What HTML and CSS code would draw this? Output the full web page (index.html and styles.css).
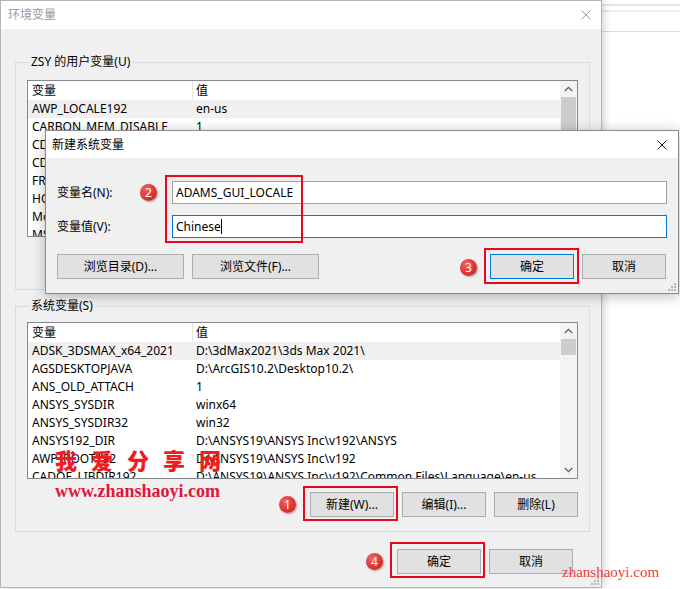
FILE: index.html
```html
<!doctype html>
<html lang="zh-CN">
<head>
    <meta charset="UTF-8">
    <title>环境变量</title>
    <link rel="stylesheet" href="styles.css">
</head>
<body>
<div class="desk">
    <!-- window behind -->
    <div class="behind"><div class="behind-line"></div></div>

    <!-- main window -->
    <div class="win">
        <div class="titlebar">
            <span class="title">环境变量</span>
            <svg class="close" width="10" height="10" viewBox="0 0 10 10"><path d="M0.5 0.5L9.5 9.5M9.5 0.5L0.5 9.5"/></svg>
        </div>
        <div class="win-body">
            <fieldset class="group user">
                <legend>ZSY 的用户变量(U)</legend>
                <div class="list">
                    <div class="list-view">
                        <div class="row head"><span>变量</span><span>值</span></div>
                        <div class="row sel"><span>AWP_LOCALE192</span><span>en-us</span></div>
                        <div class="row"><span>CARBON_MEM_DISABLE</span><span>1</span></div>
                        <div class="row"><span>CDS_LIC_FILE</span><span>5280@localhost</span></div>
                        <div class="row"><span>CDSROOT</span><span>D:\Cadence\SPB_17.2</span></div>
                        <div class="row"><span>FR_LICENSE</span><span>27000@localhost</span></div>
                        <div class="row"><span>HOME</span><span>C:\Users\ZSY</span></div>
                        <div class="row"><span>Mozilla_Home</span><span>C:\Program Files\Mozilla</span></div>
                        <div class="row"><span>MSC_LICENSE_FILE</span><span>27500@localhost</span></div>
                    </div>
                    <div class="scroll">
                        <div class="arrow"><svg width="9" height="6" viewBox="0 0 9 6"><path d="M0.8 5L4.5 1.3L8.2 5"/></svg></div>
                        <div class="thumb long"></div>
                    </div>
                </div>
                <div class="btns">
                    <button>新建(N)...</button>
                    <button>编辑(E)...</button>
                    <button>删除(D)</button>
                </div>
            </fieldset>

            <fieldset class="group sys">
                <legend>系统变量(S)</legend>
                <div class="list">
                    <div class="list-view">
                        <div class="row head"><span>变量</span><span>值</span></div>
                        <div class="row sel"><span>ADSK_3DSMAX_x64_2021</span><span>D:\3dMax2021\3ds Max 2021\</span></div>
                        <div class="row"><span>AGSDESKTOPJAVA</span><span>D:\ArcGIS10.2\Desktop10.2\</span></div>
                        <div class="row"><span>ANS_OLD_ATTACH</span><span>1</span></div>
                        <div class="row"><span>ANSYS_SYSDIR</span><span>winx64</span></div>
                        <div class="row"><span>ANSYS_SYSDIR32</span><span>win32</span></div>
                        <div class="row"><span>ANSYS192_DIR</span><span>D:\ANSYS19\ANSYS Inc\v192\ANSYS</span></div>
                        <div class="row"><span>AWP_ROOT192</span><span>D:\ANSYS19\ANSYS Inc\v192</span></div>
                        <div class="row"><span>CADOE_LIBDIR192</span><span>D:\ANSYS19\ANSYS Inc\v192\Common Files\Language\en-us</span></div>
                    </div>
                    <div class="scroll">
                        <div class="arrow"><svg width="9" height="6" viewBox="0 0 9 6"><path d="M0.8 5L4.5 1.3L8.2 5"/></svg></div>
                        <div class="thumb"></div>
                        <div class="track"></div>
                        <div class="arrow"><svg width="9" height="6" viewBox="0 0 9 6"><path d="M0.8 1L4.5 4.7L8.2 1"/></svg></div>
                    </div>
                </div>
                <div class="btns">
                    <button>新建(W)...</button>
                    <button>编辑(I)...</button>
                    <button>删除(L)</button>
                </div>
            </fieldset>

            <div class="btns bottom">
                <button>确定</button>
                <button>取消</button>
            </div>
        </div>
        <svg class="grip" width="8" height="8" viewBox="0 0 8 8">
            <rect x="6" y="0" width="2" height="2"/><rect x="3" y="3" width="2" height="2"/><rect x="6" y="3" width="2" height="2"/>
            <rect x="0" y="6" width="2" height="2"/><rect x="3" y="6" width="2" height="2"/><rect x="6" y="6" width="2" height="2"/>
        </svg>
    </div>

    <!-- new variable dialog -->
    <div class="dialog">
        <div class="titlebar dlg-title">
            <span class="title">新建系统变量</span>
            <svg class="close" width="10" height="10" viewBox="0 0 10 10"><path d="M0.5 0.5L9.5 9.5M9.5 0.5L0.5 9.5"/></svg>
        </div>
        <div class="dlg-body">
            <div class="fields">
                <label>变量名(N):</label>
                <div class="input">ADAMS_GUI_LOCALE</div>
                <label>变量值(V):</label>
                <div class="input focus">Chinese<span class="caret"></span></div>
            </div>
            <div class="dlg-btns">
                <button class="wide">浏览目录(D)...</button>
                <button class="wide">浏览文件(F)...</button>
                <button class="default push">确定</button>
                <button>取消</button>
            </div>
        </div>
        <svg class="grip" width="8" height="8" viewBox="0 0 8 8">
            <rect x="6" y="0" width="2" height="2"/><rect x="3" y="3" width="2" height="2"/><rect x="6" y="3" width="2" height="2"/>
            <rect x="0" y="6" width="2" height="2"/><rect x="3" y="6" width="2" height="2"/><rect x="6" y="6" width="2" height="2"/>
        </svg>
    </div>

    <!-- annotations -->
    <div class="mark box2"></div>
    <div class="mark box3"></div>
    <div class="mark box1"></div>
    <div class="mark box4"></div>
    <span class="badge b1">1</span>
    <span class="badge b2">2</span>
    <span class="badge b3">3</span>
    <span class="badge b4">4</span>

    <div class="wm-cn">我爱分享网</div>
    <div class="wm-url">www.zhanshaoyi.com</div>
    <div class="wm-corner">zhanshaoyi.com</div>
</div>
</body>
</html>
```

FILE: styles.css
```css
* {
    margin: 0;
    padding: 0;
    box-sizing: border-box;
}

body {
    background: #fff;
    font-family: "Noto Sans", "Noto Sans CJK SC", sans-serif;
    font-size: 12px;
    color: #000;
}

.desk {
    position: relative;
    width: 680px;
    height: 589px;
    overflow: hidden;
}

.behind {
    position: absolute;
    top: 4px;
    left: 590px;
    width: 100px;
    height: 28px;
    border-top: 2px solid #e6e6e6;
    border-bottom: 1px solid #dcdcdc;
}

.behind-line {
    margin-top: 4px;
    border-top: 2px solid #ececec;
}

/* main window */
.win {
    position: relative;
    width: 602px;
    height: 588px;
    border: 1px solid #b4b4b4;
    background: #f0f0f0;
    box-shadow: 2px 0 8px rgba(0, 0, 0, .18);
}

.titlebar {
    height: 28px;
    background: #fff;
    display: flex;
    align-items: center;
    justify-content: space-between;
    padding: 0 10px 0 7px;
}

.title {
    color: #9a9a9a;
    line-height: 16px;
}

.close path {
    stroke: #9a9a9a;
    stroke-width: 1;
    fill: none;
}

.win-body {
    padding-top: 25px;
}

.group {
    border: 1px solid #dcdcdc;
    margin: 0 11px 0 14px;
    padding: 10px 11px 14px;
}

.group legend {
    margin-left: 2px;
    padding: 0 2px;
    line-height: 16px;
}

.group.sys {
    margin-top: 8px;
    padding-top: 8px;
}

.list {
    display: flex;
    height: 157px;
    border: 1px solid #828790;
    background: #fff;
    overflow: hidden;
}

.list-view {
    flex: 1;
    overflow: hidden;
}

.row {
    display: grid;
    grid-template-columns: 165px 1fr;
    height: 18px;
    line-height: 18px;
    white-space: nowrap;
}

.row span {
    padding-left: 4px;
    overflow: hidden;
}

.row span + span {
    padding-left: 3px;
}

.row.head {
    height: 19px;
    line-height: 19px;
}

.row.head span:first-child {
    border-right: 1px solid #e5e5e5;
}

.row.sel {
    background: #f0f0f0;
}

.scroll {
    width: 17px;
    background: #f3f3f3;
    display: flex;
    flex-direction: column;
}

.scroll .arrow {
    height: 16px;
    display: flex;
    align-items: center;
    justify-content: center;
}

.scroll .arrow path {
    stroke: #606060;
    stroke-width: 1.3;
    fill: none;
}

.thumb {
    margin: 0 1px;
    height: 16px;
    background: #cdcdcd;
}

.thumb.long {
    height: 120px;
}

.track {
    flex: 1;
}

.btns {
    display: flex;
    justify-content: flex-end;
    gap: 8px;
    margin-top: 13px;
}

.btns.bottom {
    margin-top: 17px;
    padding-right: 28px;
}

button {
    width: 84px;
    height: 25px;
    border: 1px solid #adadad;
    background: #e1e1e1;
    font: inherit;
    color: #000;
    line-height: 23px;
}

.grip {
    position: absolute;
    right: 2px;
    bottom: 2px;
}

.grip rect {
    fill: #b8b8b8;
}

/* dialog */
.dialog {
    position: absolute;
    top: 130px;
    left: 45px;
    width: 634px;
    height: 164px;
    border: 1px solid #8a8a8a;
    background: #f0f0f0;
    box-shadow: 0 2px 12px rgba(0, 0, 0, .28);
}

.dlg-title {
    height: 27px;
    padding: 0 11px 0 6px;
}

.dlg-title .title {
    color: #000;
}

.dlg-title .close path {
    stroke: #222;
}

.dlg-body {
    padding: 23px 11px 0 11px;
}

.fields {
    display: grid;
    grid-template-columns: 115px 1fr;
    row-gap: 11px;
    align-items: center;
}

.fields label {
    line-height: 16px;
}

.input {
    height: 23px;
    border: 1px solid #a0a0a0;
    background: #fff;
    line-height: 21px;
    padding-left: 3px;
    white-space: nowrap;
}

.input.focus {
    border-color: #0078d7;
}

.caret {
    display: inline-block;
    width: 1px;
    height: 15px;
    background: #000;
    vertical-align: -3px;
}

.dlg-btns {
    display: flex;
    gap: 8px;
    margin-top: 16px;
    padding-right: 1px;
}

.dlg-btns .wide {
    width: 127px;
}

.dlg-btns .push {
    margin-left: auto;
}

.dlg-btns .default {
    border-color: #0078d7;
}

/* annotations */
.mark {
    position: absolute;
    border: 2px solid #e8071c;
}

.box2 { left: 165px; top: 175px; width: 138px; height: 68px; }
.box3 { left: 484px; top: 248px; width: 95px; height: 36px; }
.box1 { left: 303px; top: 486px; width: 95px; height: 35px; }
.box4 { left: 390px; top: 542px; width: 95px; height: 36px; }

.badge {
    position: absolute;
    width: 17px;
    height: 17px;
    border-radius: 50%;
    background: radial-gradient(circle at 35% 30%, #f4605f, #d42a2a 70%);
    box-shadow: 1px 1px 2px rgba(0, 0, 0, .35);
    color: #fff;
    font-size: 12px;
    line-height: 17px;
    text-align: center;
}

.b1 { left: 279px; top: 496px; }
.b2 { left: 140px; top: 184px; }
.b3 { left: 460px; top: 259px; }
.b4 { left: 366px; top: 553px; }

.wm-cn {
    position: absolute;
    left: 55px;
    top: 446px;
    font-family: "Noto Sans CJK SC", sans-serif;
    font-size: 22px;
    font-weight: 900;
    letter-spacing: 14px;
    line-height: 26px;
    color: #f01c24;
}

.wm-url {
    position: absolute;
    left: 55px;
    top: 480px;
    font-family: "Liberation Serif", serif;
    font-size: 18px;
    font-weight: 700;
    line-height: 22px;
    color: #e0163c;
}

.wm-corner {
    position: absolute;
    left: 562px;
    top: 563px;
    font-family: "Liberation Serif", serif;
    font-size: 15px;
    line-height: 18px;
    color: #e84040;
}
```
